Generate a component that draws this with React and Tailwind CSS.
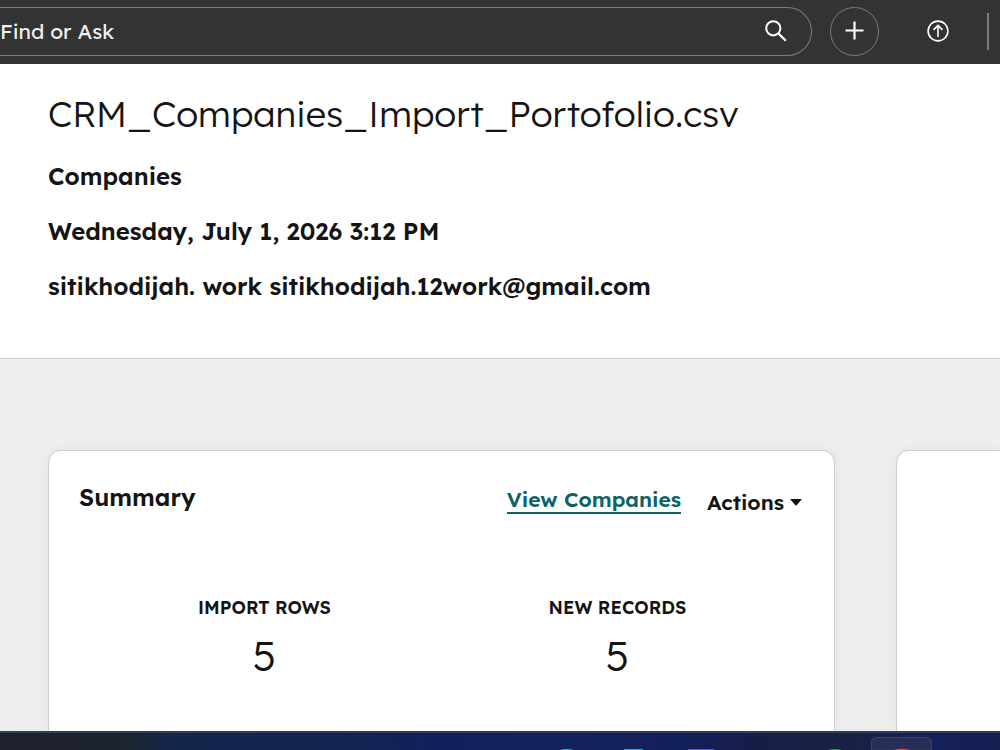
import React from "react";

/* Lexend draws a capital I with serifs; stylistic set 1 holds the plain stem. */
function PlainCapitals({ text }) {
  return text
    .split(/(I)/)
    .map((part, i) =>
      part === "I" ? (
        <span key={i} className="[font-feature-settings:'ss01']">
          I
        </span>
      ) : (
        part
      )
    );
}

function SearchIcon() {
  return (
    <svg viewBox="0 0 24 24" className="size-6" fill="none" stroke="#fff" strokeWidth="2" aria-hidden="true">
      <circle cx="9.3" cy="9.3" r="7.1" />
      <path d="M14.5 14.5 L21.8 21.8" strokeWidth="2.3" />
    </svg>
  );
}

function TopBar() {
  return (
    <header className="flex h-16 shrink-0 items-center bg-[#333333] pb-0.5 text-white">
      <form className="flex h-[49px] min-w-0 flex-1 items-center rounded-r-full border border-l-0 border-[#7c7c7c] pr-[23px]">
        <input
          type="text"
          aria-label="Find or Ask"
          placeholder="Find or Ask"
          className="h-full min-w-0 flex-1 bg-transparent text-[21px] font-normal text-white outline-none [font-feature-settings:'ss01'] placeholder:text-[#f0f0f0]"
        />
        <button type="button" aria-label="Search" className="flex">
          <SearchIcon />
        </button>
      </form>
      <button
        type="button"
        aria-label="Create"
        className="ml-[18px] flex size-[49px] items-center justify-center rounded-full border border-[#7c7c7c]"
      >
        <svg viewBox="0 0 20 20" className="size-5" stroke="#fff" strokeWidth="2.2" aria-hidden="true">
          <path d="M9.500 .5 V18.500 M.5 9.500 H18.500" />
        </svg>
      </button>
      <button type="button" aria-label="Upgrade" className="ml-12 flex">
        <svg
          viewBox="0 0 22 22"
          className="size-[22px]"
          fill="none"
          stroke="#fff"
          strokeWidth="1.6"
          strokeLinecap="round"
          strokeLinejoin="round"
          aria-hidden="true"
        >
          <circle cx="11" cy="11" r="9.9" />
          <path d="M11 16.4 V5.6 M7 9.4 L11 5.4 L15 9.4" />
        </svg>
      </button>
      <div className="mr-[11px] ml-[38px] h-[37px] w-0.5 bg-[#7c7c7c]" />
    </header>
  );
}

function ImportHeader() {
  return (
    <section className="shrink-0 border-b border-[#cfcfcf] bg-white px-12 pt-7 pb-14">
      <h1 className="text-[36px] leading-[44px] font-light whitespace-nowrap">
        <PlainCapitals text="CRM_Companies_Import_Portofolio.csv" />
      </h1>
      <div className="mt-6 flex flex-col gap-[23px] text-2xl leading-8 font-semibold whitespace-nowrap">
        <p>Companies</p>
        <p>Wednesday, July 1, 2026 3:12 PM</p>
        <p>sitikhodijah. work sitikhodijah.12work@gmail.com</p>
      </div>
    </section>
  );
}

function Stat({ label, value }) {
  return (
    <div className="flex w-[353px] flex-col items-center">
      <dt className="text-[18px] leading-6 font-semibold">
        <PlainCapitals text={label} />
      </dt>
      <dd className="mt-2.5 text-[41px] leading-[52px] font-light">{value}</dd>
    </div>
  );
}

function SummaryCard() {
  return (
    <section className="min-w-0 flex-1 rounded-t-[13px] border border-b-0 border-[#cfcfcf] bg-white px-[30px] pt-[31px] shadow-[0_1px_12px_rgba(0,0,0,0.06)]">
      <div className="flex items-start pr-0.5">
        <h2 className="flex-1 text-2xl leading-[30px] font-semibold">Summary</h2>
        <a
          href="#companies"
          className="mt-1 border-b-2 border-[#0b6368] text-[21px] leading-[26px] font-semibold text-[#0b6368]"
        >
          View Companies
        </a>
        <button type="button" className="mt-1.5 ml-[26px] flex items-center gap-1.5 text-[21px] leading-7 font-semibold">
          Actions
          <svg viewBox="0 0 12 7" className="h-[7px] w-3" fill="#141414" aria-hidden="true">
            <path d="M1 0 H11 Q12 0 11.4 .8 L6.6 6.2 Q6 6.8 5.4 6.2 L.6 .8 Q0 0 1 0Z" />
          </svg>
        </button>
      </div>
      <dl className="mt-20 flex pl-[9px]">
        <Stat label="IMPORT ROWS" value="5" />
        <Stat label="NEW RECORDS" value="5" />
      </dl>
    </section>
  );
}

function Taskbar() {
  return (
    <footer className="h-[19px] shrink-0 overflow-hidden border-t-2 border-[#323d5c] bg-[linear-gradient(90deg,#1e212b_0%,#1c2430_13%,#14264c_17%,#15244f_30%,#131f5c_45%,#13235a_54%,#131f5a_68%,#181d48_76%,#1a2140_84%,#14225a_92%,#141f52_100%)]">
      <svg viewBox="0 0 460 17" className="ml-auto block h-[17px] w-[460px]" aria-hidden="true">
        <path d="M331.500 17 V10 Q331.500 4.500 337 4.500 H386 Q391.500 4.500 391.500 10 V17Z" fill="#272d55" stroke="#3b4268" />
        <path d="M20 17 Q27 15 34 17Z" fill="#41b7dc" />
        <rect x="84" y="16" width="19" height="1" fill="#35a1e6" />
        <rect x="148" y="16" width="26" height="1" fill="#6655c4" />
        <path d="M288 17 Q295 15 302 17Z" fill="#2f9b68" />
        <path d="M354 17 Q362 14.500 370 17Z" fill="#dc4c42" />
      </svg>
    </footer>
  );
}

export default function App() {
  return (
    <div className="flex h-screen flex-col overflow-hidden bg-[#eeeeee] font-['Lexend_Deca','Lexend',sans-serif] text-[#141414]">
      <TopBar />
      <ImportHeader />
      <main className="flex min-h-0 flex-1 gap-[61px] overflow-hidden pt-[91px] pl-12">
        <SummaryCard />
        <aside
          aria-label="Import details"
          className="w-[104px] shrink-0 rounded-tl-[13px] border-t border-l border-[#cfcfcf] bg-white shadow-[0_1px_12px_rgba(0,0,0,0.06)]"
        />
      </main>
      <Taskbar />
    </div>
  );
}
